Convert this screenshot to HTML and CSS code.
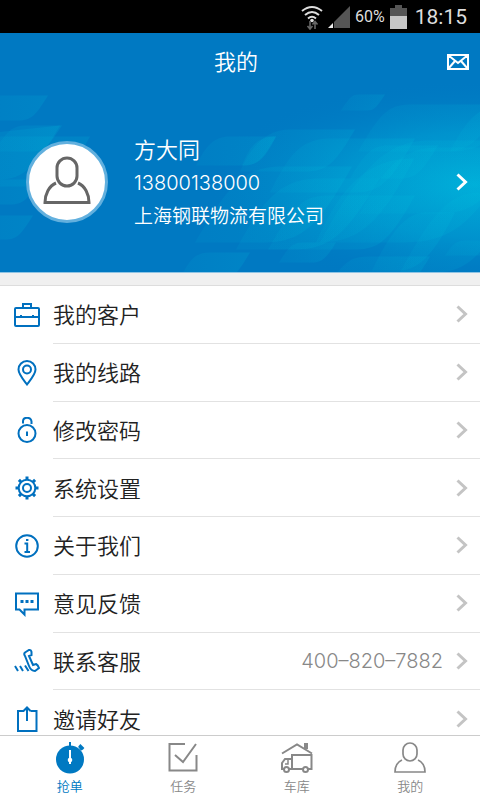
FILE: index.html
```html
<!DOCTYPE html>
<html lang="zh-CN">
<head>
<meta charset="utf-8">
<meta name="viewport" content="width=device-width, initial-scale=1">
<title>我的</title>
<link rel="stylesheet" href="styles.css">
</head>
<body>
<svg class="defs" aria-hidden="true">
  <symbol id="chevron" viewBox="0 0 12 18"><path d="M1.5 1.5 9.500 9 1.500 16.500" fill="none" stroke="currentColor" stroke-width="3"/></symbol>
</svg>

<div class="status">
  <svg width="22" height="26" viewBox="0 0 22 26" aria-hidden="true">
    <g fill="none" stroke="#ddd" stroke-width="2"><path d="M1 7Q11-1 21 7"/><path d="M4 11Q11 5 18 11"/><path d="M7 14.500Q11 11 15 14.500"/></g>
    <circle cx="11" cy="16.500" r="1.800" fill="#ddd"/>
    <path d="M9 17v8M6.500 22 9 25l2.500-3M14 25v-7M11.500 20.500 14 17.500l2.500 3" fill="none" stroke="#666" stroke-width="1.600"/>
  </svg>
  <svg width="22" height="22" viewBox="0 0 22 22" aria-hidden="true"><path d="M22 0v22H6V16Z" fill="#555"/><path d="M5 17v5H0Z" fill="#eee"/></svg>
  <span class="battery-text">60%</span>
  <svg class="battery" width="17" height="24" viewBox="0 0 17 24" aria-hidden="true"><path d="M5 0h7v3h5v8H0V3h5Z" fill="#555"/><path d="M0 11h17v13H0Z" fill="#c6c6c6"/></svg>
  <time>18:15</time>
</div>

<header class="hero">
  <svg class="hero-art" viewBox="0 33 480 240" preserveAspectRatio="xMaxYMid slice" aria-hidden="true">
    <defs>
      <radialGradient id="glow" gradientUnits="userSpaceOnUse" cx="0" cy="0" r="1" gradientTransform="translate(475 185) scale(270 105)">
        <stop offset="0" stop-color="#00b2dc" stop-opacity=".85"/>
        <stop offset=".5" stop-color="#00a0d5" stop-opacity=".5"/>
        <stop offset="1" stop-color="#0079c2" stop-opacity="0"/>
      </radialGradient>
      <linearGradient id="leaf"><stop offset="0" stop-color="#00c0dc" stop-opacity=".08"/><stop offset="1" stop-color="#00c0dc" stop-opacity=".16"/></linearGradient>
    </defs>
    <path d="M200 50H480V273H200Z" fill="url(#glow)"/>
    <g fill="url(#leaf)">
      <path d="M48 96c-12 19-16 25-30 25H-30V96Z"/>
      <path d="M62 126c-13 20-18 26-31 26H-6c12-19 18-26 31-26Z"/>
      <path d="M90 137c-20 36-35 50-60 50H-40V137Z"/>
      <path d="M60 126c-22 38-36 54-60 54H-40V137Z"/>
      <path d="M40 180c-12 19-16 25-30 25H-40V180Z"/>
      <path d="M33 216c-12 19-16 24-28 24H-40V216Z"/>
      <path d="M385 95c-8 12-10 16-18 16H341c8-12 10-16 18-16Z"/>
      <path d="M520 105c-24 37-42 47-70 47H358c20-34 28-47 52-47Z"/>
      <path d="M500 105c-14 28-28 45-50 47c12-24 26-45 50-47Z"/>
      <path d="M355 130c-20 34-28 42-50 42H240c10-24 26-42 50-42Z"/>
      <path d="M276 137c-14 24-18 29-34 29H196c10-20 18-29 34-29Z"/>
      <path d="M276 137c-10 20-16 29-34 29c8-20 16-29 34-29Z"/>
      <path d="M415 139c-24 42-34 54-60 54H270c18-36 30-54 60-54Z"/>
      <path d="M438 146c-16 26-22 33-38 33H350c14-24 22-33 38-33Z"/>
      <path d="M352 167c-34 60-50 76-90 76H195c32-54 46-76 88-76Z"/>
      <path d="M380 179c-34 56-50 71-86 71H236c24-44 42-71 82-71Z"/>
      <path d="M415 196c-24 42-34 54-60 54H268c22-38 32-54 60-54Z"/>
      <path d="M336 243c-10 16-14 20-24 20H279c10-16 14-20 24-20Z"/>
      <path d="M430 257c-12 20-16 26-30 26H330c14-20 20-26 40-26Z"/>
      <path d="M250 253c-12 20-16 26-30 26H180c10-20 16-26 30-26Z"/>
      <path d="M520 141c-44 86-70 102-118 102H320c40-74 66-102 110-102Z"/>
      <path d="M520 148c-30 50-46 66-80 66H360c26-50 44-66 80-66Z"/>
      <path d="M455 213c-22 44-38 58-56 58H372c18-38 34-58 54-58Z"/>
      <path d="M510 241c-8 12-12 15-20 15H445c8-12 12-15 20-15Z"/>
      <path d="M414 159c-36 70-58 84-98 84c26-60 54-84 98-84Z"/>
      <path d="M520 193c-36 60-50 80-86 80H400c32-60 50-80 80-80Z"/>
    </g>
  </svg>
  <div class="title-bar">
    <h1>我的</h1>
    <button class="mail" type="button" aria-label="消息">
      <svg width="22" height="16" viewBox="0 0 22 16"><path d="M1 1H21V15H1ZM1 1 11 9 21 1M1 15 8 7M21 15 14 7" fill="none" stroke="currentColor" stroke-width="2"/></svg>
    </button>
  </div>
  <a class="profile" href="#profile">
    <span class="avatar">
      <svg width="48" height="48" viewBox="0 0 48 48" aria-hidden="true"><g fill="none" stroke="#666" stroke-width="3"><rect x="14" y="2" width="20" height="28" rx="10"/><path d="M13 27C6 30 2 38 2 46.500H46C46 38 42 30 35 27"/></g></svg>
    </span>
    <span class="person">
      <span class="name">方大同</span>
      <span class="phone">13800138000</span>
      <span class="company">上海钢联物流有限公司</span>
    </span>
    <svg class="chevron" aria-hidden="true"><use href="#chevron"/></svg>
  </a>
</header>

<main class="menu">
  <a class="row" href="#customers">
    <svg class="icon" viewBox="0 0 26 26" aria-hidden="true"><rect x="1" y="6" width="24" height="18" rx="1"/><path d="M9 6V2H17V6M1 15H25M7 13v2M19 13v2"/></svg>
    <span class="cell"><span class="label">我的客户</span><svg class="chevron" aria-hidden="true"><use href="#chevron"/></svg></span>
  </a>
  <a class="row" href="#routes">
    <svg class="icon" viewBox="0 0 26 26" aria-hidden="true"><path d="M13 24.500C8 18 4.500 14 4.500 9.500a8.500 8.500 0 0 1 17 0C21.500 14 18 18 13 24.500Z"/><circle cx="13" cy="9.500" r="4"/></svg>
    <span class="cell"><span class="label">我的线路</span><svg class="chevron" aria-hidden="true"><use href="#chevron"/></svg></span>
  </a>
  <a class="row" href="#password">
    <svg class="icon" viewBox="0 0 26 26" aria-hidden="true"><circle cx="13" cy="16.500" r="8.500"/><path d="M9 6.500V4.500Q9 .8 13 .8T17.500 4.500V7M13 14.500v4.500"/></svg>
    <span class="cell"><span class="label">修改密码</span><svg class="chevron" aria-hidden="true"><use href="#chevron"/></svg></span>
  </a>
  <a class="row" href="#settings">
    <svg class="icon" viewBox="0 0 26 26" aria-hidden="true"><circle cx="13" cy="13" r="8.300"/><circle cx="13" cy="13" r="4"/><path class="teeth" d="M13 1.500V5M13 21v3.500M1.500 13H5M21 13h3.500M4.900 4.900 7.300 7.300M18.700 18.700l2.400 2.400M4.900 21.100l2.400-2.400M18.700 7.300l2.400-2.400"/></svg>
    <span class="cell"><span class="label">系统设置</span><svg class="chevron" aria-hidden="true"><use href="#chevron"/></svg></span>
  </a>
  <a class="row" href="#about">
    <svg class="icon" viewBox="0 0 26 26" aria-hidden="true"><circle cx="13" cy="13" r="10.800"/><path d="M10.500 10.500H13.200V19M10.500 19H16M12 7h2.400"/></svg>
    <span class="cell"><span class="label">关于我们</span><svg class="chevron" aria-hidden="true"><use href="#chevron"/></svg></span>
  </a>
  <a class="row" href="#feedback">
    <svg class="icon" viewBox="0 0 26 26" aria-hidden="true"><path d="M2 2.500H24V18.500H10.500V23.500L5.500 18.500H2Z"/><path class="dots" d="M6.500 10.500h3M11.500 10.500h3M16.500 10.500h3"/></svg>
    <span class="cell"><span class="label">意见反馈</span><svg class="chevron" aria-hidden="true"><use href="#chevron"/></svg></span>
  </a>
  <a class="row" href="#service">
    <svg class="icon" viewBox="0 0 26 26" aria-hidden="true"><path d="M11 4.500 15 2Q17 1.500 17.500 4L17.500 7 15 8 19 17 22 16Q24 17 25 20L21 23Q17 23 15 18L11 8Q9.500 6 11 4.500Z"/><path d="M1 18 4 23M6 18 9 23M11 17.500 14.500 23"/></svg>
    <span class="cell"><span class="label">联系客服</span><span class="value">400–820–7882</span><svg class="chevron" aria-hidden="true"><use href="#chevron"/></svg></span>
  </a>
  <a class="row" href="#invite">
    <svg class="icon" viewBox="0 0 26 26" aria-hidden="true"><path d="M10 5H4V25H22.500V5H16.500M13 15V1.500M9.500 5 13 1.500 16.500 5"/></svg>
    <span class="cell"><span class="label">邀请好友</span><svg class="chevron" aria-hidden="true"><use href="#chevron"/></svg></span>
  </a>
</main>

<nav class="tabs">
  <a class="tab active" href="#grab">
    <svg width="32" height="32" viewBox="0 0 32 32" aria-hidden="true"><circle cx="16" cy="17.500" r="14" fill="currentColor"/><path d="M16 0v5" stroke="currentColor" stroke-width="2"/><path d="M25 4l3 4M25.500 3l4 4" stroke="currentColor" stroke-width="2.500"/><path d="M16 8v14" stroke="#fff" stroke-width="2"/><circle cx="16" cy="18" r="2.300" fill="#fff"/></svg>
    <span>抢单</span>
  </a>
  <a class="tab" href="#tasks">
    <svg width="32" height="32" viewBox="0 0 32 32" aria-hidden="true"><g fill="none" stroke="currentColor" stroke-width="2"><path d="M18 2H2.500V28.500H29.500V13"/><path d="M8 13 16 20 29 2"/></g></svg>
    <span>任务</span>
  </a>
  <a class="tab" href="#garage">
    <svg width="32" height="32" viewBox="0 0 32 32" aria-hidden="true"><g fill="none" stroke="currentColor" stroke-width="2"><path d="M1 11.500 16 2.500 31 11.500"/><path d="M25 1v6" stroke-width="4"/><path d="M11 27V13H30.500V27H27M22 27H8M3.500 27H1V21L4 17H11"/><path d="M7 18v4H4" stroke-width="1.500"/><circle cx="5.500" cy="27.500" r="2.500" fill="#fff"/><circle cx="24.500" cy="27.500" r="2.500" fill="#fff"/></g></svg>
    <span>车库</span>
  </a>
  <a class="tab" href="#me">
    <svg width="32" height="32" viewBox="0 0 32 32" aria-hidden="true"><g fill="none" stroke="currentColor" stroke-width="1.700"><rect x="9" y="1" width="14" height="18" rx="7"/><path d="M8 18C3.500 20 1 24 1 30H31C31 24 28.500 20 24 18"/></g></svg>
    <span>我的</span>
  </a>
</nav>
</body>
</html>
```
FILE: styles.css
```css
* { box-sizing: border-box; }

body {
  margin: 0;
  min-height: 100vh;
  display: flex;
  flex-direction: column;
  background: #fff;
  color: #222;
  font-family: "Noto Sans CJK SC", sans-serif;
  font-weight: 350;
}

a { color: inherit; text-decoration: none; }
svg { flex: none; display: block; }
.defs { position: absolute; width: 0; height: 0; }

.status {
  display: flex;
  align-items: center;
  justify-content: flex-end;
  gap: 5px;
  height: 33px;
  padding-right: 13px;
  background: #000;
  color: #ddd;
  font-family: Roboto, sans-serif;
  font-weight: 400;
}
.battery-text { font-size: 16px; }
.battery { margin-right: 3px; }
.status time { font-size: 21px; }

.hero {
  position: relative;
  height: 240px;
  display: flex;
  flex-direction: column;
  background: #0079c2;
  border-bottom: 1px solid #8fc4e4;
  color: #fff;
}
.hero-art { position: absolute; inset: 0; width: 100%; height: 100%; }

.title-bar {
  position: relative;
  display: grid;
  grid-template-columns: 1fr auto 1fr;
  align-items: center;
  height: 58px;
  padding: 0 11px 0 3px;
}
.title-bar h1 {
  grid-column: 2;
  margin: 0;
  padding-bottom: 4px;
  font-size: 22px;
  font-weight: 350;
}
.mail {
  justify-self: end;
  padding: 0;
  border: 0;
  background: none;
  color: #fff;
}

.profile {
  position: relative;
  display: flex;
  flex: 1;
  align-items: center;
  padding: 0 12px 0 26px;
}
.avatar {
  display: flex;
  align-items: center;
  justify-content: center;
  width: 82px;
  height: 82px;
  margin-right: 26px;
  padding-bottom: 4px;
  border: 3px solid #62b0de;
  border-radius: 50%;
  background: #fff;
}
.person {
  display: flex;
  flex: 1;
  flex-direction: column;
  line-height: 32px;
}
.name { padding-bottom: 3px; font-size: 22px; }
.phone { font-family: Inter, sans-serif; font-size: 20px; font-weight: 300; }
.company { font-size: 19px; }

.chevron { width: 12px; height: 18px; }

.menu {
  display: flex;
  flex: 1;
  flex-direction: column;
  padding-bottom: 52px;
  border-top: 12px solid #f0f0f0;
}
.row {
  display: flex;
  flex: 1;
  align-items: stretch;
  min-height: 48px;
  padding-left: 14px;
}
.row:first-child { border-top: 1px solid #ddd; }
.icon {
  align-self: center;
  width: 26px;
  height: 26px;
  margin-right: 13px;
  fill: none;
  stroke: #0070bf;
  stroke-width: 2;
}
.icon .teeth, .icon .dots { stroke-width: 3; }
.cell {
  display: flex;
  flex: 1;
  align-items: center;
  padding-right: 12px;
  border-bottom: 1px solid #e2e2e2;
}
.label { flex: 1; padding-bottom: 2px; font-size: 22px; }
.value {
  margin-right: 13px;
  color: #888;
  font-family: Inter, sans-serif;
  font-size: 20px;
  font-weight: 300;
}
.cell .chevron { color: #c4c4c4; }

.tabs {
  position: fixed;
  right: 0;
  bottom: 0;
  left: 0;
  display: flex;
  height: 65px;
  padding: 0 13px;
  border-top: 1px solid #ccc;
  background: #fff;
}
.tab {
  display: flex;
  flex: 1;
  flex-direction: column;
  align-items: center;
  gap: 2px;
  padding-top: 6px;
  color: #888;
  font-size: 13px;
  line-height: 20px;
}
.tab.active { color: #0079c2; }
```
